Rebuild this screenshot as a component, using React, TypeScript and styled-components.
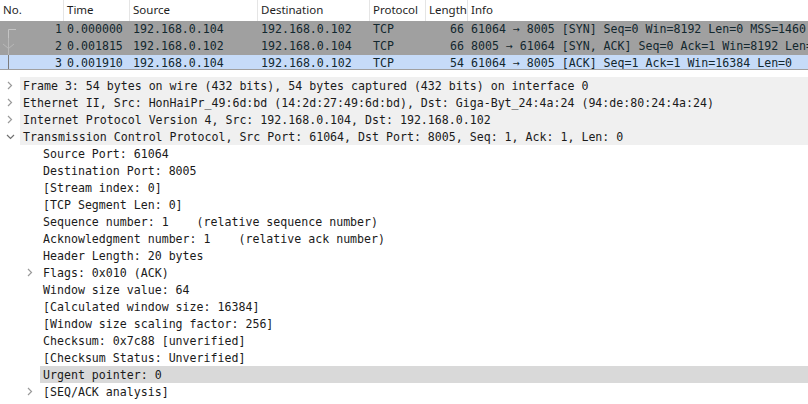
import React from "react";
import styled, { createGlobalStyle } from "styled-components";

const GlobalStyle = createGlobalStyle`
  html, body {
    margin: 0;
    padding: 0;
    background: #ffffff;
  }
  body {
    font-family: "DejaVu Sans Mono", monospace;
  }
`;

const MONO = `"DejaVu Sans Mono", "Liberation Mono", monospace`;
const COLS = "64px 66px 128px 112px 56px 42px 1fr";

const StyledMain = styled.main`
  width: 808px;
  height: 404px;
  overflow: hidden;
  background: #ffffff;
  display: flex;
  flex-direction: column;
`;

const StyledPacketList = styled.section`
  height: 69px;
  overflow: hidden;
  border-bottom: 1px solid #a0a0a0;
  flex-shrink: 0;
`;

const StyledHeader = styled.div`
  display: grid;
  grid-template-columns: ${COLS};
  height: 21px;
  background: #ffffff;
`;

const StyledHeaderCell = styled.div`
  font-family: "Noto Sans", "Open Sans", sans-serif;
  font-size: 11.5px;
  color: #1e1e1e;
  line-height: 20px;
  padding: 0 3px;
  border-right: 1px solid #e5e5e5;
  white-space: nowrap;
  overflow: hidden;
  &:last-child {
    border-right: none;
  }
`;

const StyledPacketRow = styled.div<{ $bg: string }>`
  display: grid;
  grid-template-columns: ${COLS};
  height: 17px;
  background: ${(p) => p.$bg};
  color: #12272e;
  font-family: ${MONO};
  font-size: 11.6px;
  line-height: 17px;
`;

const StyledCell = styled.div<{ $right?: boolean }>`
  padding: 0 4px 0 3px;
  white-space: pre;
  overflow: hidden;
  text-align: ${(p) => (p.$right ? "right" : "left")};
`;

const StyledNoCell = styled.div`
  display: flex;
  justify-content: space-between;
  padding-right: 2px;
  white-space: pre;
`;

const StyledGap = styled.div`
  height: 7px;
  flex-shrink: 0;
`;

const StyledTree = styled.section`
  display: flex;
  flex-direction: column;
  font-family: ${MONO};
  font-size: 11.6px;
  color: #1a1a1a;
`;

const StyledTreeRow = styled.div<{ $indent: number }>`
  display: flex;
  height: 17px;
  line-height: 18px;
  padding-left: ${(p) => p.$indent}px;
`;

const StyledArrowBox = styled.div`
  width: 20px;
  flex-shrink: 0;
  display: flex;
  align-items: center;
  justify-content: center;
`;

const StyledLabel = styled.div<{ $bg?: string }>`
  flex: 1;
  padding-left: 3px;
  white-space: pre;
  overflow: hidden;
  background: ${(p) => p.$bg || "transparent"};
`;

type Arrow = "none" | "right" | "down";

const Chevron = ({ dir }: { dir: Arrow }) => {
  if (dir === "none") return null;
  return dir === "right" ? (
    <svg width="8" height="9" viewBox="0 0 8 9">
      <polyline points="2,1 5.5,4.5 2,8" fill="none" stroke="#9a9a9a" strokeWidth="1.2" />
    </svg>
  ) : (
    <svg width="9" height="8" viewBox="0 0 9 8">
      <polyline points="1,2 4.5,5.5 8,2" fill="none" stroke="#707070" strokeWidth="1.2" />
    </svg>
  );
};

const RelatedMark = ({ kind, color }: { kind: "first" | "ack" | "mid"; color: string }) => (
  <svg width="18" height="17" viewBox="0 0 18 17">
    {kind === "first" ? (
      <>
        <line x1="8.5" y1="8.5" x2="16" y2="8.5" stroke={color} strokeWidth="1" />
        <line x1="8.5" y1="8.5" x2="8.5" y2="17" stroke={color} strokeWidth="1" />
      </>
    ) : (
      <line x1="8.5" y1="0" x2="8.5" y2="17" stroke={color} strokeWidth="1" />
    )}
    {kind === "ack" && (
      <polyline points="3,6 8.5,10.5 14,6" fill="none" stroke={color} strokeWidth="1" />
    )}
  </svg>
);

const packets = [
  {
    no: "1",
    time: "0.000000",
    src: "192.168.0.104",
    dst: "192.168.0.102",
    proto: "TCP",
    len: "66",
    info: "61064 → 8005 [SYN] Seq=0 Win=8192 Len=0 MSS=1460",
    bg: "#a0a0a0",
    mark: "first" as const,
    markColor: "#c4c4c4",
  },
  {
    no: "2",
    time: "0.001815",
    src: "192.168.0.102",
    dst: "192.168.0.104",
    proto: "TCP",
    len: "66",
    info: "8005 → 61064 [SYN, ACK] Seq=0 Ack=1 Win=8192 Len=0",
    bg: "#a0a0a0",
    mark: "ack" as const,
    markColor: "#b8b8b8",
  },
  {
    no: "3",
    time: "0.001910",
    src: "192.168.0.104",
    dst: "192.168.0.102",
    proto: "TCP",
    len: "54",
    info: "61064 → 8005 [ACK] Seq=1 Ack=1 Win=16384 Len=0",
    bg: "#c6dbf8",
    mark: "mid" as const,
    markColor: "#7c7c7c",
  },
];

const TOP_BG = "#f0f0f0";

// indent: left offset in px; arrow: chevron drawn in the 20px box before the text
const tree: { indent: number; arrow: Arrow; text: string; bg?: string }[] = [
  { indent: 0, arrow: "right", text: "Frame 3: 54 bytes on wire (432 bits), 54 bytes captured (432 bits) on interface 0", bg: TOP_BG },
  { indent: 0, arrow: "right", text: "Ethernet II, Src: HonHaiPr_49:6d:bd (14:2d:27:49:6d:bd), Dst: Giga-Byt_24:4a:24 (94:de:80:24:4a:24)", bg: TOP_BG },
  { indent: 0, arrow: "right", text: "Internet Protocol Version 4, Src: 192.168.0.104, Dst: 192.168.0.102", bg: TOP_BG },
  { indent: 0, arrow: "down", text: "Transmission Control Protocol, Src Port: 61064, Dst Port: 8005, Seq: 1, Ack: 1, Len: 0", bg: TOP_BG },
  { indent: 20, arrow: "none", text: "Source Port: 61064" },
  { indent: 20, arrow: "none", text: "Destination Port: 8005" },
  { indent: 20, arrow: "none", text: "[Stream index: 0]" },
  { indent: 20, arrow: "none", text: "[TCP Segment Len: 0]" },
  { indent: 20, arrow: "none", text: "Sequence number: 1    (relative sequence number)" },
  { indent: 20, arrow: "none", text: "Acknowledgment number: 1    (relative ack number)" },
  { indent: 20, arrow: "none", text: "Header Length: 20 bytes" },
  { indent: 20, arrow: "right", text: "Flags: 0x010 (ACK)" },
  { indent: 20, arrow: "none", text: "Window size value: 64" },
  { indent: 20, arrow: "none", text: "[Calculated window size: 16384]" },
  { indent: 20, arrow: "none", text: "[Window size scaling factor: 256]" },
  { indent: 20, arrow: "none", text: "Checksum: 0x7c88 [unverified]" },
  { indent: 20, arrow: "none", text: "[Checksum Status: Unverified]" },
  { indent: 20, arrow: "none", text: "Urgent pointer: 0", bg: "#d9d9d9" },
  { indent: 20, arrow: "right", text: "[SEQ/ACK analysis]" },
];

export default () => {
  return (
    <StyledMain>
      <GlobalStyle />
      <StyledPacketList>
        <StyledHeader>
          {["No.", "Time", "Source", "Destination", "Protocol", "Length", "Info"].map((h) => (
            <StyledHeaderCell key={h}>{h}</StyledHeaderCell>
          ))}
        </StyledHeader>
        {packets.map((p) => (
          <StyledPacketRow key={p.no} $bg={p.bg}>
            <StyledNoCell>
              <RelatedMark kind={p.mark} color={p.markColor} />
              <span>{p.no}</span>
            </StyledNoCell>
            <StyledCell>{p.time}</StyledCell>
            <StyledCell>{p.src}</StyledCell>
            <StyledCell>{p.dst}</StyledCell>
            <StyledCell>{p.proto}</StyledCell>
            <StyledCell $right>{p.len}</StyledCell>
            <StyledCell>{p.info}</StyledCell>
          </StyledPacketRow>
        ))}
      </StyledPacketList>
      <StyledGap />
      <StyledTree>
        {tree.map((t, idx) => (
          <StyledTreeRow key={idx} $indent={t.indent}>
            <StyledArrowBox>
              <Chevron dir={t.arrow} />
            </StyledArrowBox>
            <StyledLabel $bg={t.bg}>{t.text}</StyledLabel>
          </StyledTreeRow>
        ))}
      </StyledTree>
    </StyledMain>
  );
};
